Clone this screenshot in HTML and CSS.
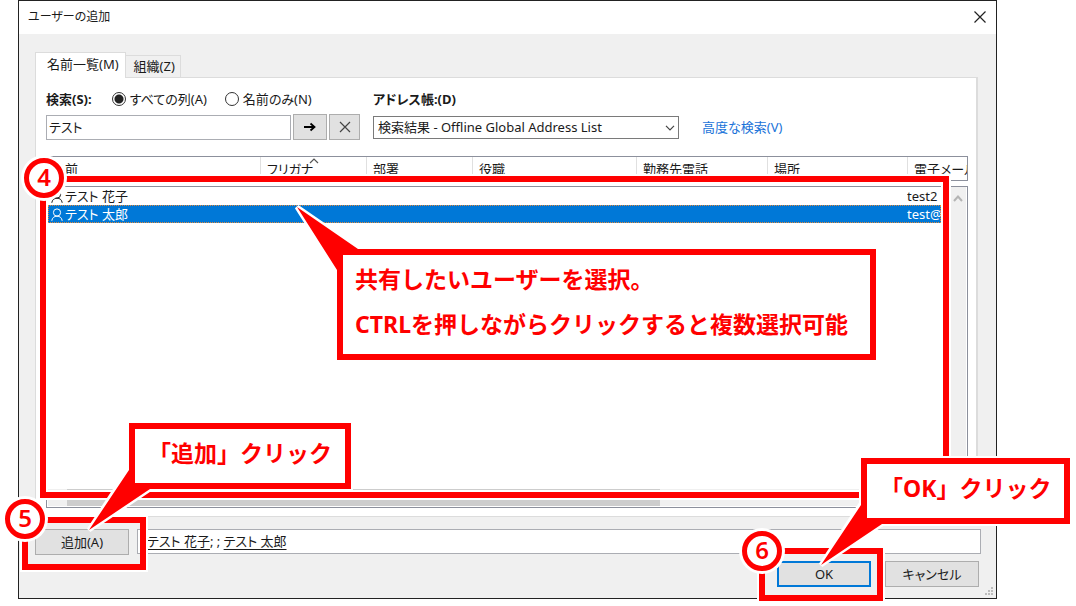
FILE: index.html
```html
<!DOCTYPE html>
<html lang="ja">
<head>
<meta charset="utf-8">
<title>ユーザーの追加</title>
<link rel="stylesheet" href="styles.css">
</head>
<body>
<main class="stage">
  <section class="dialog" aria-labelledby="dialog-title">
    <header class="titlebar">
      <h1 class="title" id="dialog-title">ユーザーの追加</h1>
      <button class="close" type="button" aria-label="閉じる">
        <svg width="12" height="12" viewBox="0 0 12 12"><path d="M.5.5l11 11M11.5.5l-11 11" stroke="#222" stroke-width="1.2" fill="none"/></svg>
      </button>
    </header>

    <div class="content">
      <div class="tabs" role="tablist">
        <button class="tab tab-active" type="button" role="tab" aria-selected="true">名前一覧(M)</button>
        <button class="tab" type="button" role="tab" aria-selected="false">組織(Z)</button>
      </div>

      <div class="panel" role="tabpanel">
        <div class="search">
          <div class="scope">
            <label class="strong" for="query">検索(S):</label>
            <label class="choice"><input class="radio" type="radio" name="scope" checked>すべての列(A)</label>
            <label class="choice"><input class="radio" type="radio" name="scope">名前のみ(N)</label>
          </div>
          <label class="strong" for="book">アドレス帳:(D)</label>
          <span></span>
          <div class="query-row">
            <input class="query" id="query" type="text" value="テスト">
            <button class="button button-go" type="button" aria-label="検索">
              <svg width="12" height="10" viewBox="0 0 12 10"><path d="M0 5h10M6.500 1.500L10.500 5l-4 3.500" stroke="#000" stroke-width="1.800" fill="none"/></svg>
            </button>
            <button class="button button-clear" type="button" aria-label="クリア">
              <svg width="12" height="12" viewBox="0 0 12 12"><path d="M1 1l10 10M11 1L1 11" stroke="#444" stroke-width="1.200" fill="none"/></svg>
            </button>
          </div>
          <div class="book-wrap">
            <select class="book" id="book"><option>検索結果 - Offline Global Address List</option></select>
            <svg class="book-arrow" width="10" height="6" viewBox="0 0 10 6"><path d="M1 .8l4 4 4-4" stroke="#444" stroke-width="1.200" fill="none"/></svg>
          </div>
          <a class="link" href="#">高度な検索(V)</a>
        </div>

        <div class="results">
          <table class="list">
            <thead class="list-head">
              <tr class="row">
                <th>名前</th>
                <th>フリガナ<svg class="sort" width="10" height="6" viewBox="0 0 10 6"><path d="M1 5l4-4 4 4" stroke="#555" stroke-width="1.200" fill="none"/></svg></th>
                <th>部署</th><th>役職</th><th>勤務先電話</th><th>場所</th><th>電子メール</th>
              </tr>
            </thead>
            <tbody class="list-body">
              <tr class="row entry">
                <td><svg class="person" width="12" height="13" viewBox="0 0 12 13"><circle cx="6" cy="4.500" r="3.600"/><path d="M.8 12.800C1.200 9.700 3.200 8.200 6 8.200s4.800 1.500 5.200 4.600"/></svg>テスト 花子</td>
                <td></td><td></td><td></td><td></td><td></td><td>test2</td>
              </tr>
              <tr class="row entry entry-selected">
                <td><svg class="person" width="12" height="13" viewBox="0 0 12 13"><circle cx="6" cy="4.500" r="3.600"/><path d="M.8 12.800C1.200 9.700 3.200 8.200 6 8.200s4.800 1.500 5.200 4.600"/></svg>テスト 太郎</td>
                <td></td><td></td><td></td><td></td><td></td><td>test@</td>
              </tr>
            </tbody>
          </table>
          <div class="vscroll"><svg width="10" height="7" viewBox="0 0 10 7"><path d="M1 6l4-4.500L9 6" stroke="#b4b4b4" stroke-width="2" fill="none"/></svg></div>
          <div class="hscroll"><div class="thumb"></div></div>

          <div class="frame frame-list"></div>
          <div class="badge badge-list">4</div>
          <div class="callout callout-list">
            <svg class="tail tail-list halo" width="61" height="63" viewBox="0 0 61 63"><path d="M0 0L61 42V63H40Z"/></svg>
            <div class="callout-box"><p>共有したいユーザーを選択。</p><p>CTRLを押しながらクリックすると複数選択可能</p></div>
            <svg class="tail tail-list" width="61" height="63" viewBox="0 0 61 63"><path d="M0 0L61 42V44L44 46L42 63H40Z"/></svg>
          </div>
        </div>
      </div>

      <div class="recipients-row">
        <div class="anchor">
          <button class="button button-add" type="button">追加(A)</button>
        </div>
        <div class="recipients" role="textbox" aria-label="追加" contenteditable="true" spellcheck="false"><u>テスト 花子</u>; ; <u>テスト 太郎</u></div>
        <div class="marks marks-add">
          <div class="frame frame-button"></div>
          <div class="badge badge-button">5</div>
          <div class="callout callout-add">
            <svg class="tail tail-add halo" width="61" height="61" viewBox="0 0 61 61"><path d="M0 61L40 0H61V20Z"/></svg>
            <div class="callout-box callout-short"><p>「追加」クリック</p></div>
            <svg class="tail tail-add" width="61" height="61" viewBox="0 0 61 61"><path d="M0 61L40 1H42L45 17L61 18V20Z"/></svg>
          </div>
        </div>
      </div>

      <div class="actions">
        <div class="anchor">
          <button class="button button-ok" type="button">OK</button>
          <div class="marks">
            <div class="frame frame-button"></div>
            <div class="badge badge-button">6</div>
            <div class="callout callout-ok">
              <svg class="tail tail-add halo" width="61" height="61" viewBox="0 0 61 61"><path d="M0 61L40 0H61V20Z"/></svg>
              <div class="callout-box callout-short"><p>「OK」クリック</p></div>
              <svg class="tail tail-add" width="61" height="61" viewBox="0 0 61 61"><path d="M0 61L40 1H42L45 17L61 18V20Z"/></svg>
            </div>
          </div>
        </div>
        <button class="button button-cancel" type="button">キャンセル</button>
      </div>
    </div>
    <svg class="grip" width="9" height="9" viewBox="0 0 9 9"><path d="M6 0h2v2H6zM3 3h2v2H3zM6 3h2v2H6zM0 6h2v2H0zM3 6h2v2H3zM6 6h2v2H6z" fill="#bcbcbc"/></svg>
  </section>
</main>
</body>
</html>
```
FILE: styles.css
```css
* { box-sizing: border-box; }

body {
  margin: 0;
  background: #fff;
  color: #1a1a1a;
  font: 13px/18px "Noto Sans", "Noto Sans CJK JP", sans-serif;
  font-feature-settings: "palt";
}

button, input, select {
  margin: 0;
  color: inherit;
  font: inherit;
  font-feature-settings: inherit;
}

p { margin: 0; }

.stage {
  display: flex;
  min-height: 100vh;
  padding: 0 79px 7px 18px;
}

.dialog {
  position: relative;
  display: flex;
  flex: 1;
  flex-direction: column;
  min-width: 0;
  border: 1px solid #222;
  background: #f0f0f0;
}

.titlebar {
  display: flex;
  align-items: center;
  justify-content: space-between;
  height: 33px;
  padding: 0 10px 2px 9px;
  background: #fff;
}

.title {
  margin: 0;
  font-size: 12px;
  font-weight: 400;
}

.close {
  display: flex;
  padding: 0;
  border: 0;
  background: none;
}

.content {
  display: flex;
  flex: 1;
  flex-direction: column;
  padding: 18px 15px 11px 16px;
}

.tabs {
  display: flex;
  align-items: flex-end;
}

.tab {
  height: 22px;
  padding: 0 5px 2px 8px;
  border: 1px solid #dcdcdc;
  border-bottom: 0;
  border-left: 0;
  background: #f0f0f0;
}

.tab-active {
  z-index: 1;
  height: 26px;
  margin-bottom: -1px;
  padding: 0 6px 4px 11px;
  border-left: 1px solid #dcdcdc;
  background: #fff;
}

.panel {
  display: flex;
  flex: 1;
  flex-direction: column;
  gap: 16px;
  margin-right: 3px;
  padding: 12px 8px 8px 10px;
  border: 1px solid #dcdcdc;
  border-right-width: 2px;
  background: #fff;
}

.search {
  display: grid;
  grid-template-columns: 314px 306px 1fr;
  gap: 6px 13px;
  align-items: center;
}

.scope, .choice, .query-row {
  display: flex;
  align-items: center;
}

.scope { gap: 18px; }
.scope .strong { margin-right: 2px; }
.choice { gap: 4px; }
.strong { font-weight: 700; }

.radio {
  width: 14px;
  height: 14px;
  border: 1px solid #333;
  border-radius: 50%;
  background: #fff;
  appearance: none;
}

.radio:checked { background: radial-gradient(circle, #222 0 4px, #fff 5px); }

.query-row { gap: 2px; }

.query {
  flex: 1;
  min-width: 0;
  height: 25px;
  padding: 0 2px 2px;
  border: 1px solid #abadb3;
  background: #fff;
}

.button {
  display: flex;
  align-items: center;
  justify-content: center;
  width: 94px;
  height: 26px;
  padding: 0;
  border: 1px solid #adadad;
  background: #e1e1e1;
}

.button-go { width: 34px; }
.button-clear { width: 31px; }
.button-ok { border: 2px solid #0078d7; }

.book-wrap { position: relative; }

.book {
  display: block;
  width: 100%;
  height: 23px;
  padding: 0 4px;
  border: 1px solid #7a7a7a;
  border-radius: 0;
  background: #fff;
  appearance: none;
}

.book-arrow {
  position: absolute;
  top: 9px;
  right: 4px;
  pointer-events: none;
}

.link {
  padding-left: 10px;
  color: #1a73d9;
  text-decoration: none;
}

.results {
  position: relative;
  display: flex;
  flex: 1;
  flex-direction: column;
}

.list {
  display: flex;
  flex: 1;
  flex-direction: column;
  gap: 5px;
}

.list-head, .list-body {
  display: block;
  border: 1px solid #8c909c;
  border-width: 1px 1px 1px 0;
}

.list-head { height: 25px; }

.list-body {
  flex: 1;
  border-left-width: 1px;
}

.row {
  display: grid;
  grid-template-columns: 214px 106px 106px 164px 131px 140px 1fr;
}

th, td {
  overflow: hidden;
  padding: 0;
  text-align: left;
  font-weight: 400;
  white-space: nowrap;
}

th {
  position: relative;
  height: 23px;
  padding: 3px 0 0 6px;
}

th + th { border-left: 1px solid #e0e0e0; }

.sort {
  position: absolute;
  top: 1px;
  left: 48px;
}

.entry {
  grid-template-columns: 212px 106px 106px 164px 131px 140px 1fr;
  margin: 0 26px 0 1px;
  line-height: 18px;
}

.entry td:first-child {
  display: flex;
  align-items: center;
  gap: 2px;
  padding-left: 3px;
}

.entry-selected {
  outline: 1px dotted #e08a3c;
  outline-offset: -1px;
  background: #0078d7;
  color: #fff;
}

.person {
  fill: none;
  stroke: currentColor;
  stroke-width: 1;
}

.vscroll {
  position: absolute;
  top: 31px;
  right: 2px;
  bottom: 1px;
  display: flex;
  justify-content: center;
  width: 17px;
  padding-top: 8px;
  background: #f0f0f0;
}

.hscroll {
  position: absolute;
  right: 2px;
  bottom: 2px;
  left: 2px;
  height: 17px;
  padding: 0 306px 0 19px;
  background: #f0f0f0;
}

.thumb {
  height: 100%;
  background: #cdcdcd;
}

.recipients-row {
  position: relative;
  display: flex;
  gap: 8px;
  align-items: flex-start;
  margin-top: 12px;
}

.recipients {
  flex: 1;
  height: 25px;
  padding: 2px 9px;
  border: 1px solid #abadb3;
  background: #fff;
}

.recipients u { text-underline-offset: 3px; }

.actions {
  display: flex;
  gap: 14px;
  justify-content: flex-end;
  margin-top: 6px;
  padding-right: 2px;
}

.anchor { position: relative; }

.grip {
  position: absolute;
  right: 2px;
  bottom: 2px;
}

/* Red step annotations over the dialog */
.marks {
  position: absolute;
  top: 0;
  left: 0;
  width: 94px;
  height: 26px;
  pointer-events: none;
}

.frame {
  position: absolute;
  border: 6px solid #f00;
  box-shadow: 0 0 0 2px #fff, inset 0 0 0 2px #fff;
  pointer-events: none;
}

.frame-list { inset: 20px 19px 10px -6px; }

.frame-button {
  inset: -12px -17px -15px -13px;
  box-shadow: 0 0 0 2px #fff;
}

.actions .frame-button { inset: -13px -12px -14px -18px; }

.badge {
  position: absolute;
  width: 40px;
  height: 40px;
  border: 5px solid #f00;
  border-radius: 50%;
  box-shadow: 0 0 0 3px #fff;
  background: #fff;
  color: #f00;
  font: 600 24px/28px "Noto Sans", sans-serif;
  text-align: center;
}

.badge-list { top: 2px; left: -22px; }
.badge-button { top: -30px; left: -30px; }
.actions .badge-button { left: -35px; }

.callout {
  position: absolute;
  isolation: isolate;
  color: #f00;
  font-size: 23px;
  font-weight: 700;
  line-height: 45px;
  font-feature-settings: normal;
  white-space: nowrap;
}

.callout-list { top: 93px; left: 291px; }
.callout-add { bottom: 66px; left: 94px; }
.callout-ok { bottom: 63px; left: 84px; }

.callout-box {
  position: relative;
  padding: 2px 22px 7px 12px;
  border: 6px solid #f00;
  box-shadow: 0 0 0 2px #fff;
  background: #fff;
}

.callout-short { padding: 2px 13px 7px; }

.tail {
  position: absolute;
  overflow: visible;
  fill: #f00;
}

.halo {
  stroke: #fff;
  stroke-width: 5px;
}

.tail-list { top: -42px; left: -40px; }
.tail-add { bottom: -41px; left: -40px; }
```
